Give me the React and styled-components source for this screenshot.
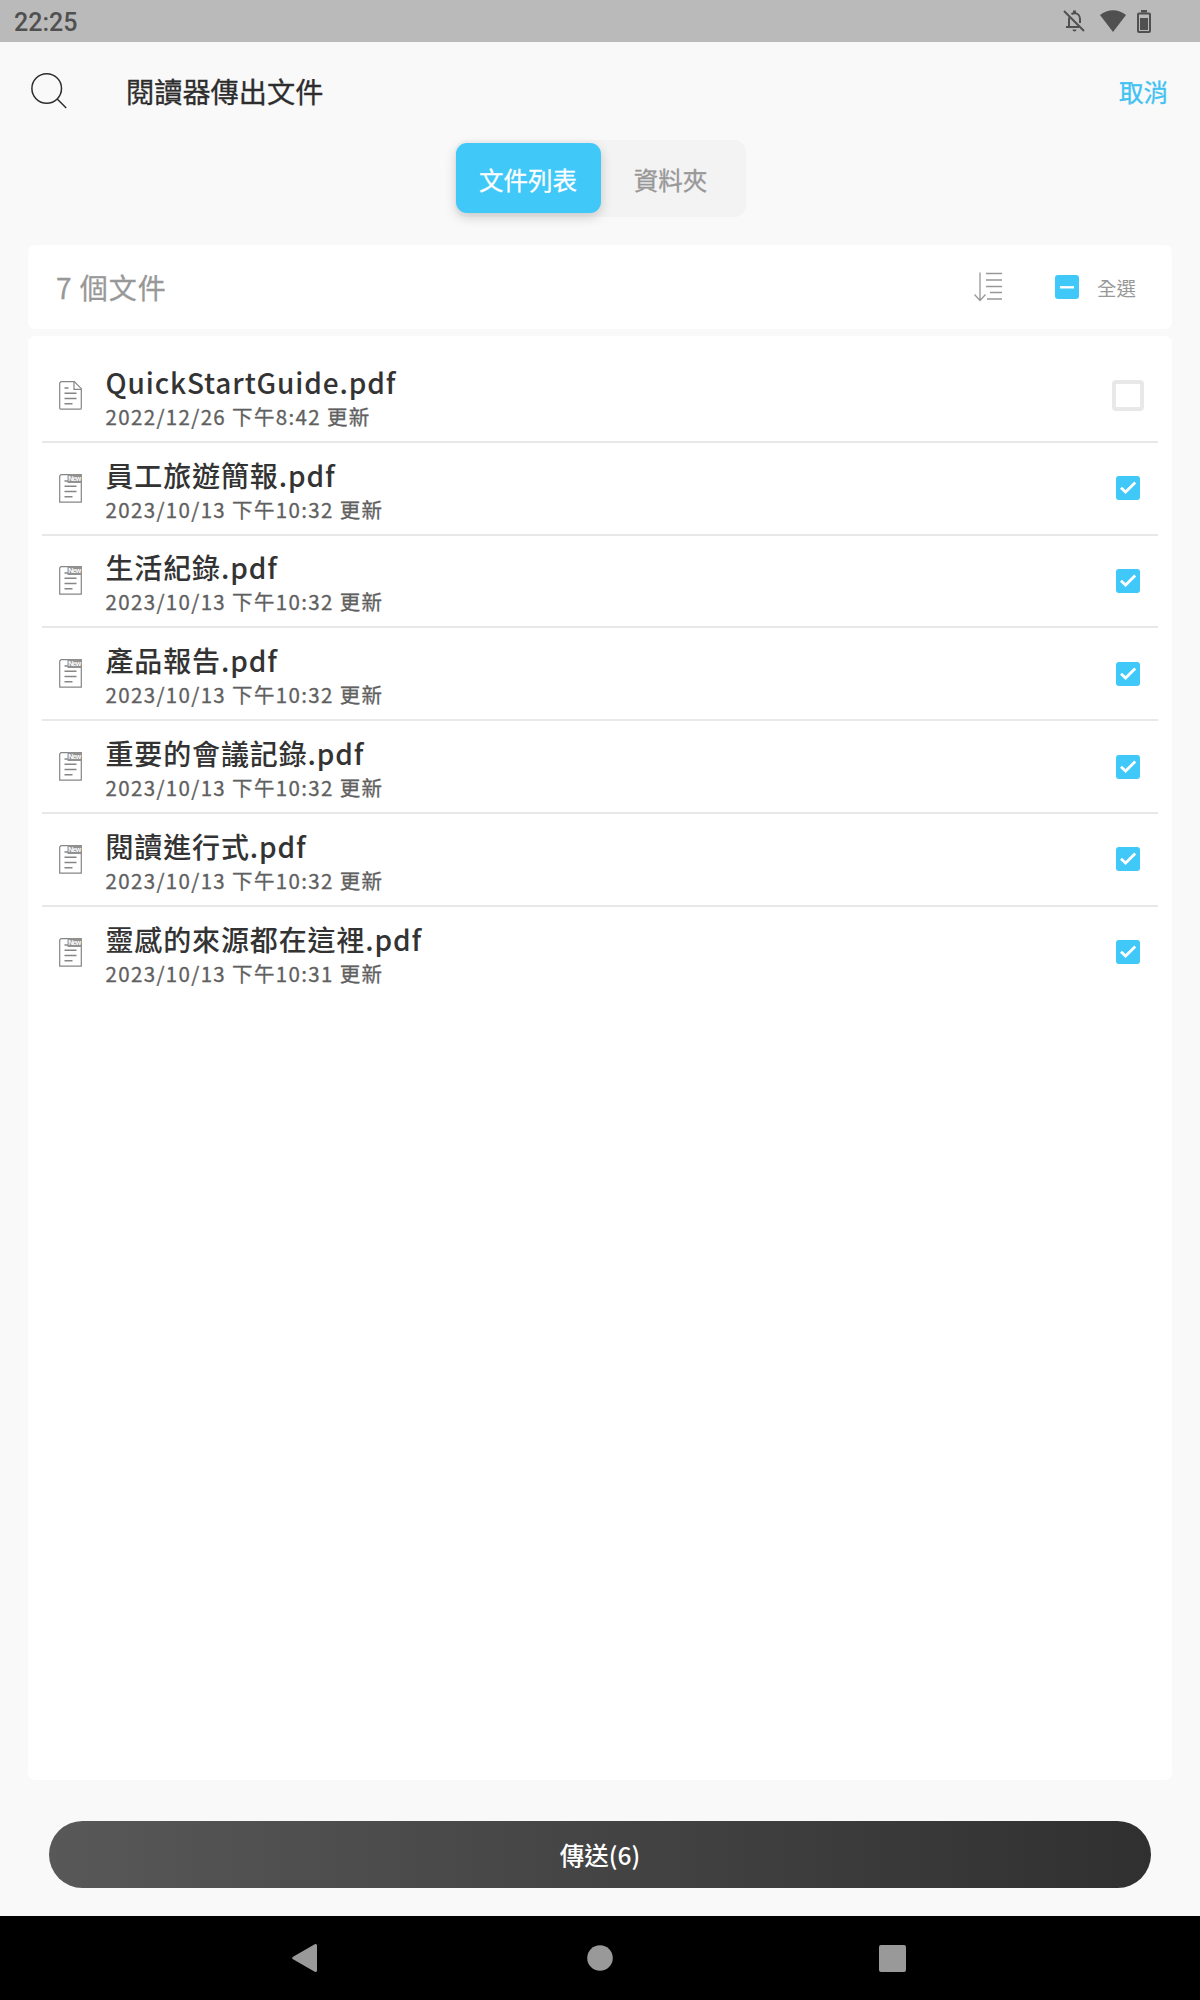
import React from "react";
import styled, { createGlobalStyle, css } from "styled-components";

const GlobalStyle = createGlobalStyle`
    * { box-sizing: border-box; }
    body {
        margin: 0;
        background: #f9f9f9;
        font-family: "Noto Sans CJK TC", "Noto Sans", sans-serif;
        font-weight: 500;
    }
    button {
        border: 0;
        padding: 0;
        background: none;
        font: inherit;
    }
    svg { display: block; flex: none; }
`;

// regular weight, slightly thickened
const softMedium = css`
    font-weight: 400;
    -webkit-text-stroke: 0.3px currentColor;
`;

const files = [
    { name: "QuickStartGuide.pdf", date: "2022/12/26 下午8:42 更新", read: true, checked: false },
    { name: "員工旅遊簡報.pdf", date: "2023/10/13 下午10:32 更新", checked: true },
    { name: "生活紀錄.pdf", date: "2023/10/13 下午10:32 更新", checked: true },
    { name: "產品報告.pdf", date: "2023/10/13 下午10:32 更新", checked: true },
    { name: "重要的會議記錄.pdf", date: "2023/10/13 下午10:32 更新", checked: true },
    { name: "閱讀進行式.pdf", date: "2023/10/13 下午10:32 更新", checked: true },
    { name: "靈感的來源都在這裡.pdf", date: "2023/10/13 下午10:31 更新", checked: true },
];

const Screen = styled.div`
    display: flex;
    flex-direction: column;
    width: 1200px;
    height: 2000px;
    overflow: hidden;
`;

const StatusBar = styled.div`
    display: flex;
    align-items: center;
    height: 42px;
    padding: 2px 49px 0 14px;
    background: #bababa;
    color: #505050;
`;

const Clock = styled.span`
    flex: 1;
    padding-top: 2px;
    font-family: Roboto, sans-serif;
    font-size: 25px;
    line-height: 38px;
`;

const StatusIcons = styled.div`
    display: flex;
    align-items: center;
    gap: 14px;
    margin-top: -2px;

    svg:first-child { margin-right: 1px; }
    svg:last-child { margin-left: -3px; }
`;

const Header = styled.header`
    display: flex;
    align-items: center;
    height: 98px;
    padding: 0 32px 0 30px;
`;

const Title = styled.h1`
    flex: 1;
    margin: 0 0 0 58px;
    color: #2d2d2d;
    font-size: 28.2px;
    line-height: 40px;
    ${softMedium}
`;

const Cancel = styled.button`
    margin-top: 2px;
    color: #41c2f2;
    font-size: 24.5px;
    line-height: 36px;
    ${softMedium}
`;

const Tabs = styled.div`
    display: flex;
    align-self: center;
    width: 291px;
    height: 77px;
    padding: 3px 1px;
    border-radius: 12px;
    background: #f3f3f3;
`;

const Tab = styled.button`
    width: ${({ $active }) => ($active ? 145 : 140)}px;
    height: 70px;
    padding-top: 2px;
    border-radius: 11px;
    background: ${({ $active }) => ($active ? "#40c8f8" : "transparent")};
    box-shadow: ${({ $active }) => ($active ? "0 4px 12px rgba(0, 0, 0, 0.18)" : "none")};
    color: ${({ $active }) => ($active ? "#fff" : "#989898")};
    font-size: 24.5px;
    ${softMedium}
`;

const Card = styled.section`
    margin: 0 28px;
    border-radius: 7px;
    background: #fff;
`;

const Toolbar = styled(Card)`
    display: flex;
    align-items: center;
    height: 84px;
    margin-top: 28px;
    padding: 0 36px 0 28px;
`;

const Count = styled.span`
    flex: 1;
    color: #989898;
    font-size: 28px;
    letter-spacing: 1px;
    ${softMedium}
`;

const SelectAll = styled.div`
    display: flex;
    align-items: center;
    gap: 18px;
    margin-left: 52px;
    color: #989898;
    font-size: 19.5px;
`;

const SelectAllLabel = styled.span`
    padding-top: 1px;
    font-weight: 400;
`;

const FileList = styled(Card)`
    height: 1444px;
    margin-top: 7px;
    padding: 14px 14px 0;
`;

const FileRow = styled.div`
    display: flex;
    align-items: center;
    height: 92.8px;
    padding: 0 14px 0 16.5px;
    border-bottom: 2px solid #e8e8e8;

    &:last-child { border-bottom-color: transparent; }
`;

const FileText = styled.div`
    flex: 1;
    margin-left: 24px;
    padding-top: 5px;
`;

const FileName = styled.div`
    color: #333;
    font-size: 28px;
    letter-spacing: 0.87px;
    line-height: 36px;
`;

const FileDate = styled.div`
    color: #606060;
    font-size: 20.5px;
    letter-spacing: 1.35px;
    line-height: 32px;
    ${softMedium}
`;

const CheckCell = styled.span`
    display: flex;
    align-items: center;
    justify-content: center;
    width: 32px;
    height: 32px;
`;

const EmptyBox = styled.span`
    width: 32px;
    height: 31px;
    border: 4px solid #e8e8e8;
    border-radius: 4px;
`;

const FilledBox = styled.span`
    display: flex;
    width: 24px;
    height: 24px;
    border-radius: 3px;
    background: #40c8f8;
`;

const SendButton = styled.button`
    height: 67px;
    margin: 41px 49px 28px;
    border-radius: 34px;
    background: linear-gradient(90deg, #585858, #303030);
    color: #fff;
    font-size: 24.5px;
`;

const NavBar = styled.nav`
    display: flex;
    flex: 1;
    align-items: center;
    justify-content: space-between;
    padding: 0 294px 0 292px;
    background: #000;
`;

const BellOffIcon = () => (
    <svg width="22" height="22" viewBox="0 0 22 22" fill="none" stroke="#505050" strokeWidth="2">
        <path d="M1 1l20 20" />
        <path d="M6 7.5V17M3 17h13M8.5 4.2C9.3 3.4 10 3.2 11.500 3.200c3.300 0 5.500 2.500 5.500 5.800v4" />
        <path d="M11.500 0.500v2.500" strokeWidth="3" />
        <path d="M9.500 19.500h4a2 2 0 0 1-4 0z" fill="#505050" stroke="none" />
    </svg>
);

const WifiIcon = () => (
    <svg width="26" height="22" viewBox="0 0 26 22">
        <path d="M0 5C7.500-1.400 18.500-1.400 26 5L13 22z" fill="#505050" />
    </svg>
);

const BatteryIcon = () => (
    <svg width="14" height="23" viewBox="0 0 14 23">
        <path d="M4 0h6v2.500H4z" fill="#505050" />
        <rect x="1" y="3.500" width="12" height="18.500" rx="1" fill="none" stroke="#505050" strokeWidth="2" />
        <path d="M3 8h8v12H3z" fill="#505050" />
    </svg>
);

const SearchIcon = () => (
    <svg width="38" height="38" viewBox="0 0 38 38" fill="none" stroke="#2d2d2d" strokeWidth="1.500">
        <circle cx="16.700" cy="16.500" r="14.800" />
        <path d="M27.200 27l9 9" />
    </svg>
);

const SortIcon = () => (
    <svg width="29" height="30" viewBox="0 0 29 30" fill="none" stroke="#989898" strokeWidth="1.300">
        <path d="M6 0.500v28M0.500 22.500L6 28.500l5.500-6" />
        <path d="M12 1.500h16M12 8h16M12 14.500h16M16 20.500h12M13 27h15" />
    </svg>
);

const NewBadge = styled.text`
    fill: #fff;
    font-family: "Liberation Sans", sans-serif;
    font-size: 7px;
    font-weight: 700;
`;

const FileIcon = ({ isNew }) => (
    <svg width="23" height="29" viewBox="0 0 23 29" fill="none" stroke="#868686" strokeWidth="1.200">
        {isNew ? (
            <path d="M2 0.700h20.300v27.500H0.700V2z" />
        ) : (
            <>
                <path d="M2 0.700h13.300l7 7v19.500a1 1 0 0 1-1 1H1.700a1 1 0 0 1-1-1V2z" />
                <path d="M15 0.700v7.600h7.300" />
            </>
        )}
        <path d="M5.500 7h4M5.500 12.300h12M5.500 17.500h12M5.500 22.700h8" strokeWidth="1.500" />
        {isNew && (
            <>
                <path d="M8.500 0.300H23V9H8.500z" fill="#929292" stroke="none" />
                <NewBadge x="9.200" y="7.300" textLength="13" stroke="none">New</NewBadge>
            </>
        )}
    </svg>
);

const CheckIcon = () => (
    <svg width="24" height="24" viewBox="0 0 24 24" fill="none" stroke="#fff" strokeWidth="2.800">
        <path d="M5 11.700l4.600 4.400 9.600-9.500" />
    </svg>
);

const MinusIcon = () => (
    <svg width="24" height="24" viewBox="0 0 24 24" stroke="#fff" strokeWidth="2.400">
        <path d="M5 12.300h14" />
    </svg>
);

const BackIcon = () => (
    <svg width="29" height="30" viewBox="0 0 29 30">
        <path d="M1.800 15L23.500 2.500v25z" fill="#999" stroke="#999" strokeWidth="3" strokeLinejoin="round" />
    </svg>
);

const HomeIcon = () => (
    <svg width="26" height="26" viewBox="0 0 26 26">
        <circle cx="13" cy="13" r="12.800" fill="#999" />
    </svg>
);

const RecentIcon = () => (
    <svg width="27" height="27" viewBox="0 0 27 27">
        <rect width="27" height="27" rx="2" fill="#999" />
    </svg>
);

const Checkbox = ({ checked }) => (
    <CheckCell>
        {checked ? <FilledBox><CheckIcon /></FilledBox> : <EmptyBox />}
    </CheckCell>
);

const App = () => (
    <Screen>
        <GlobalStyle />
        <StatusBar>
            <Clock>22:25</Clock>
            <StatusIcons>
                <BellOffIcon />
                <WifiIcon />
                <BatteryIcon />
            </StatusIcons>
        </StatusBar>
        <Header>
            <SearchIcon />
            <Title>閱讀器傳出文件</Title>
            <Cancel>取消</Cancel>
        </Header>
        <Tabs>
            <Tab $active>文件列表</Tab>
            <Tab>資料夾</Tab>
        </Tabs>
        <Toolbar>
            <Count>7 個文件</Count>
            <SortIcon />
            <SelectAll>
                <FilledBox><MinusIcon /></FilledBox>
                <SelectAllLabel>全選</SelectAllLabel>
            </SelectAll>
        </Toolbar>
        <FileList>
            {files.map((file) => (
                <FileRow key={file.name}>
                    <FileIcon isNew={!file.read} />
                    <FileText>
                        <FileName>{file.name}</FileName>
                        <FileDate>{file.date}</FileDate>
                    </FileText>
                    <Checkbox checked={file.checked} />
                </FileRow>
            ))}
        </FileList>
        <SendButton>傳送(6)</SendButton>
        <NavBar>
            <BackIcon />
            <HomeIcon />
            <RecentIcon />
        </NavBar>
    </Screen>
);

export default App;
